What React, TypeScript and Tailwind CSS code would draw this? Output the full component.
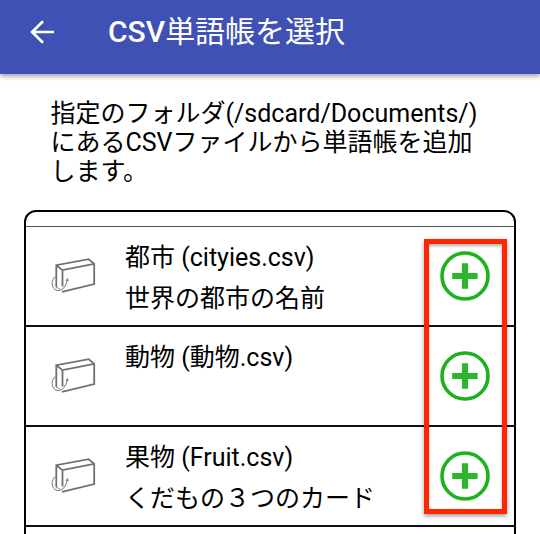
type Deck = { name: string; note: string };

const decks: Deck[] = [
  { name: '都市 (cityies.csv)', note: '世界の都市の名前' },
  { name: '動物 (動物.csv)', note: '' },
  { name: '果物 (Fruit.csv)', note: 'くだもの３つのカード' },
];

function BackArrow() {
  return (
    <svg width="24" height="24" viewBox="0 0 24 24" fill="none" stroke="#fff" strokeWidth="2.7">
      <path d="M24 12H2M13 1.2L2.1 12L13 22.8" />
    </svg>
  );
}

function CardBox() {
  return (
    <svg width="50" height="40" viewBox="0 0 50 40" fill="none" stroke="#707070" strokeWidth="1.8">
      <path d="M6.3 32V10.2L38.8 4.2L44.2 8.8V29L12 36.8" />
      <path d="M6.3 10.2L12.5 15.1L44.2 8.8M12.5 15.1V31.5" />
      <path d="M5.5 21.5C1 25 1.2 32 5.2 34.6C10.5 37.7 16.2 32.5 17.3 24.5" strokeWidth="1" />
      <path d="M16 25.6L17.4 23.4L18.4 25.6Z" strokeWidth="0.7" />
      <path d="M6 32L10 34" strokeWidth="0.8" />
    </svg>
  );
}

function AddIcon() {
  return (
    <svg width="50" height="50" viewBox="0 0 50 50" fill="none" stroke="#1db21d">
      <circle cx="25" cy="25" r="23" strokeWidth="3.6" />
      <path d="M12.2 25H37.6M25 12.3V37.7" stroke="#2db52f" strokeWidth="6.2" />
    </svg>
  );
}

export default function App() {
  return (
    <div className="relative h-[534px] w-[540px] overflow-hidden bg-white font-[Roboto,'Noto_Sans_CJK_JP',sans-serif] text-black">
      <header className="flex h-[74px] items-start bg-[#3f51b5] pl-[30px] text-white shadow-[0_2px_5px_rgba(0,0,0,0.4)]">
        <div className="mt-5">
          <BackArrow />
        </div>
        <h1 className="ml-[54px] mt-[10px] whitespace-nowrap text-[30px] leading-[44px]">
          <span className="font-medium">CSV</span>単語帳を選択
        </h1>
      </header>
      <p className="ml-[50.5px] mt-[25px] whitespace-nowrap text-[25px] leading-[29px]">
        指定のフォルダ(/sdcard/Documents/)
        <br />
        にあるCSVファイルから単語帳を追加
        <br />
        します。
      </p>
      <main className="ml-6 mt-6 h-[340px] w-[492px] rounded-t-[12px] border-2 border-black">
        <div className="h-[15px] border-b border-[#555]" />
        {decks.map((deck) => (
          <div key={deck.name} className="flex h-[100px] border-b-2 border-[#111]">
            <div className="ml-[24px] mt-[28px] w-[50px]">
              <CardBox />
            </div>
            <div className="ml-[25px] w-[315px] whitespace-nowrap pt-[10px] text-[25px] leading-[41px]">
              <div>{deck.name}</div>
              <div>{deck.note}</div>
            </div>
            <button className="mt-6 h-[50px] w-[50px]" aria-label="追加">
              <AddIcon />
            </button>
          </div>
        ))}
      </main>
      <div className="absolute left-[424px] top-[239px] h-[275px] w-[83px] border-5 border-[#ff2600] shadow-[0_2px_4px_rgba(0,0,0,0.4),inset_0_2px_3px_rgba(0,0,0,0.3)]" />
    </div>
  );
}
